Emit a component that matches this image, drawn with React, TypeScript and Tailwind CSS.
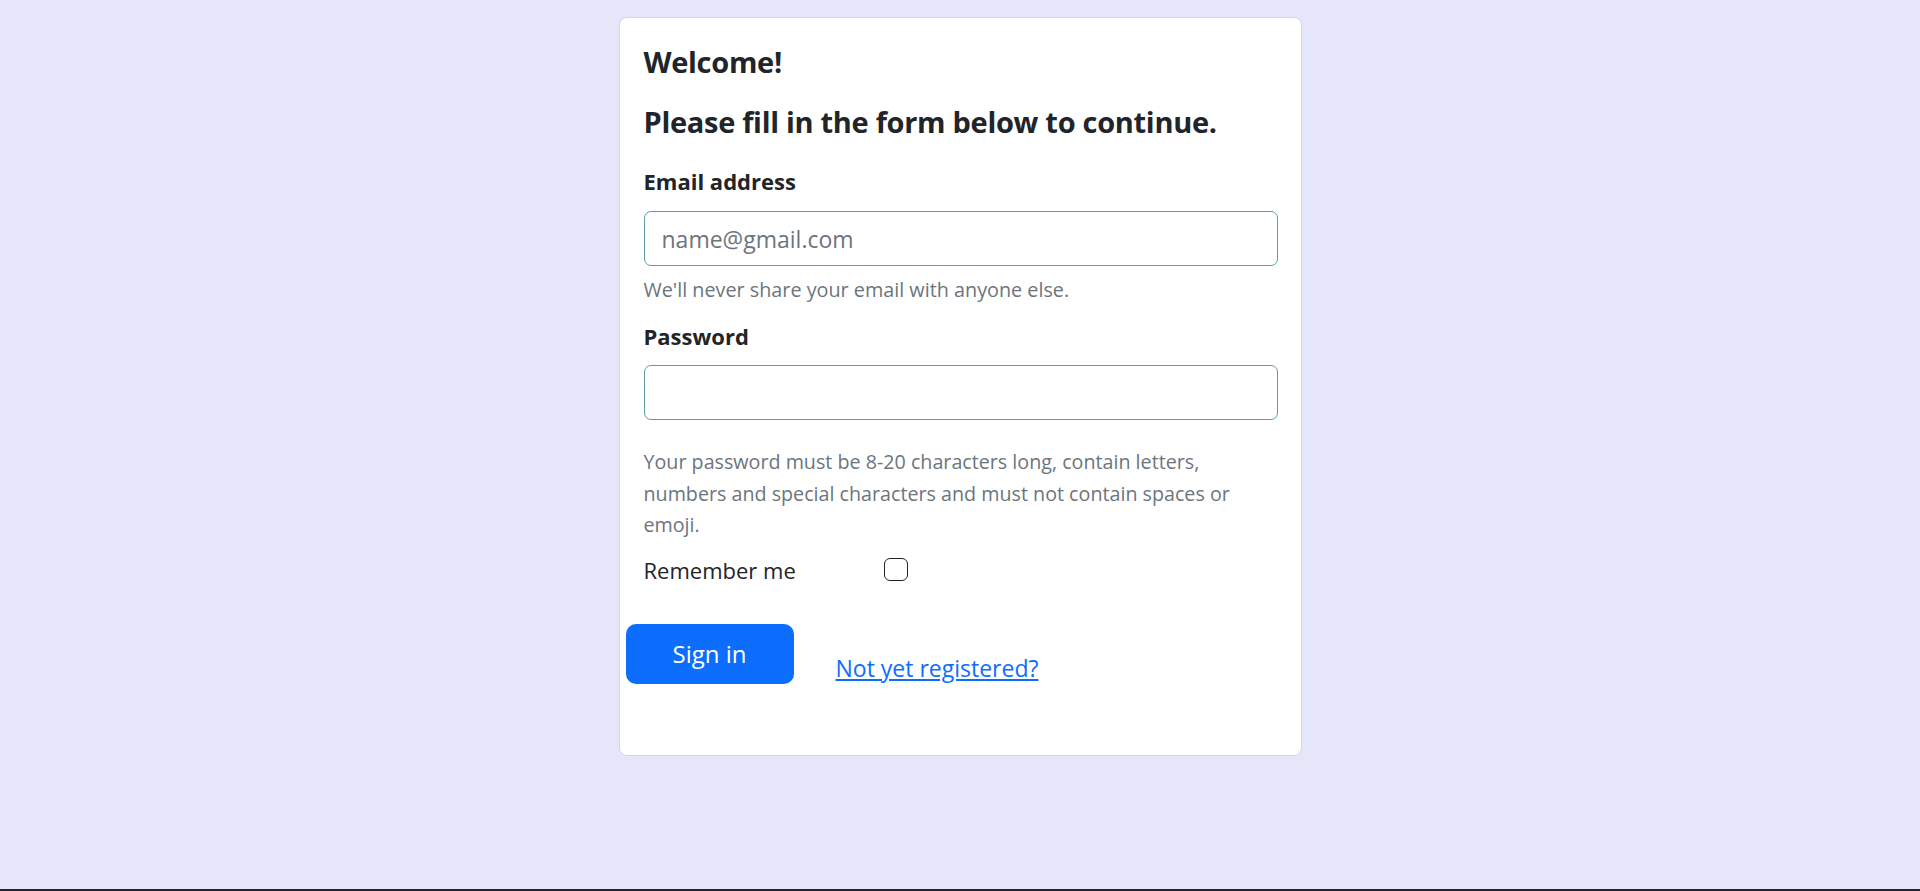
export default function App() {
    return (
        <div className="min-h-[891px] bg-[#e6e6fa] flex flex-col font-['Open_Sans',sans-serif] text-[#212529]">
            <div className="flex-1">
                {/* Card */}
                <div className="mx-auto mt-[17px] w-[683px] h-[739px] rounded-[8px] border border-[#d6d6de] bg-white pl-[24px] pr-[23px] pt-[26px]">
                    <h1 className="text-[29px] leading-[36px] font-bold tracking-[-0.3px]">Welcome!</h1>
                    <h2 className="mt-[24px] text-[29px] leading-[36px] font-bold tracking-[-0.3px]">Please fill in the form below to continue.</h2>

                    <form onSubmit={(e) => e.preventDefault()}>
                        <label className="mt-[26px] block text-[22px] leading-[30px] font-bold">Email address</label>
                        <input
                            type="email"
                            placeholder="name@gmail.com"
                            className="mt-[15px] block h-[55px] w-full rounded-[7px] border border-[#5f9ea0] px-[17px] text-[23px] outline-none placeholder:text-[#6c757d]"
                        />
                        <p className="mt-[10px] text-[19.8px] leading-[27px] text-[#6c757d]">We'll never share your email with anyone else.</p>

                        <label className="mt-[18px] block text-[22px] leading-[30px] font-bold">Password</label>
                        <input
                            type="password"
                            className="mt-[14px] block h-[55px] w-full rounded-[7px] border border-[#5f9ea0] px-[17px] text-[23px] outline-none"
                        />
                        <p className="mt-[26px] text-[19.7px] leading-[31.5px] text-[#6c757d]">
                            Your password must be 8-20 characters long, contain letters, numbers and special characters and must not contain spaces or emoji.
                        </p>

                        <div className="mt-[14px] flex h-[30px] items-center">
                            <span className="w-[240px] text-[22px] leading-[30px]">Remember me</span>
                            <span className="h-[23px] w-[24px] rounded-[6px] border-[1.5px] border-[#212529] bg-white" />
                        </div>

                        <div className="mt-[39px] -ml-[18px] flex items-start">
                            <button
                                type="submit"
                                className="h-[60px] w-[168px] rounded-[10px] bg-[#0d6efd] text-[24px] text-white"
                            >
                                Sign in
                            </button>
                            <a href="#" className="ml-[42px] mt-[29px] text-[23px] leading-[30px] text-[#0d6efd] underline">
                                Not yet registered?
                            </a>
                        </div>
                    </form>
                </div>
            </div>
            <div className="h-[2px] bg-[#212529]" />
        </div>
    );
}
